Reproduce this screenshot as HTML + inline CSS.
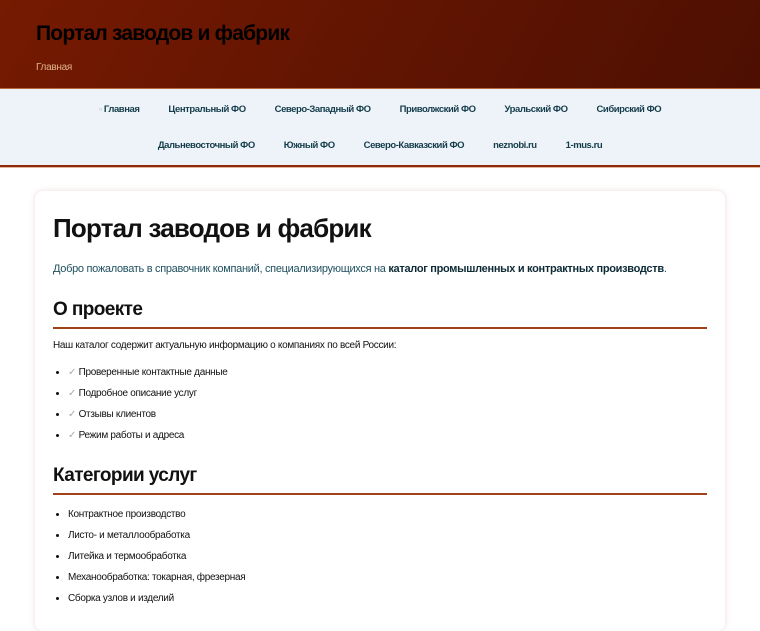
<!DOCTYPE html>
<html><head><meta charset="utf-8"><style>
*{box-sizing:border-box}
body{margin:0;background:#fff;font-family:"Liberation Sans",Arial,sans-serif;color:#111;width:760px;height:600px;overflow:hidden;letter-spacing:-0.3px}
header{height:88px;background:linear-gradient(120deg,#761a02,#4d0f02);padding:22px 36px 0}
header h1{margin:0;font-size:21px;font-weight:bold;color:#000;letter-spacing:-0.8px}
header .bc{margin-top:16px;font-size:10px;color:#e0b48a}
nav{height:79px;background:#eef3f9;border-top:1px solid #b46a3c;border-bottom:2px solid #8e2a0b;box-shadow:0 1px 0 #e0b89a;font-size:9.5px;font-weight:bold;color:#143c4a;letter-spacing:-0.45px}
nav .r{position:absolute;left:0;width:760px;text-align:center}
nav span{margin:0 14.5px}
.card{position:absolute;left:35px;top:191px;width:690px;height:440px;border-radius:8px;box-shadow:0 0 6px rgba(200,150,150,.35);padding:22px 18px}
.card h1{margin:0;font-size:26px;letter-spacing:-0.8px}
.lead{margin:19px 0 0;font-size:11px;color:#1f5060;letter-spacing:-0.3px}
.lead b{color:#0d2a35}
h2{margin:24px 0 0;font-size:19px;padding-bottom:6px;border-bottom:2px solid #a0411a;letter-spacing:-0.6px}
p{font-size:10px;margin:11px 0 0}
ul{margin:16px 0 0;padding-left:15px;font-size:10px}
li{margin-bottom:10px;line-height:11px}
.ck{color:#aaa}
</style></head><body>
<header><h1>Портал заводов и фабрик</h1><div class="bc">Главная</div></header>
<nav><div class="r" style="top:104px"><span><span style="margin:0;color:#bbb">▫</span> Главная</span><span>Центральный ФО</span><span>Северо-Западный ФО</span><span>Приволжский ФО</span><span>Уральский ФО</span><span>Сибирский ФО</span></div>
<div class="r" style="top:140px"><span>Дальневосточный ФО</span><span>Южный ФО</span><span>Северо-Кавказский ФО</span><span>neznobi.ru</span><span>1-mus.ru</span></div></nav>
<div class="card">
<h1>Портал заводов и фабрик</h1>
<div class="lead">Добро пожаловать в справочник компаний, специализирующихся на <b>каталог промышленных и контрактных производств</b>.</div>
<h2>О проекте</h2>
<p>Наш каталог содержит актуальную информацию о компаниях по всей России:</p>
<ul><li><span class="ck">✓</span> Проверенные контактные данные</li><li><span class="ck">✓</span> Подробное описание услуг</li><li><span class="ck">✓</span> Отзывы клиентов</li><li><span class="ck">✓</span> Режим работы и адреса</li></ul>
<h2 style="margin-top:24px">Категории услуг</h2>
<ul style="margin-top:14px"><li>Контрактное производство</li><li>Листо- и металлообработка</li><li>Литейка и термообработка</li><li>Механообработка: токарная, фрезерная</li><li>Сборка узлов и изделий</li></ul>
</div>
</body></html>
